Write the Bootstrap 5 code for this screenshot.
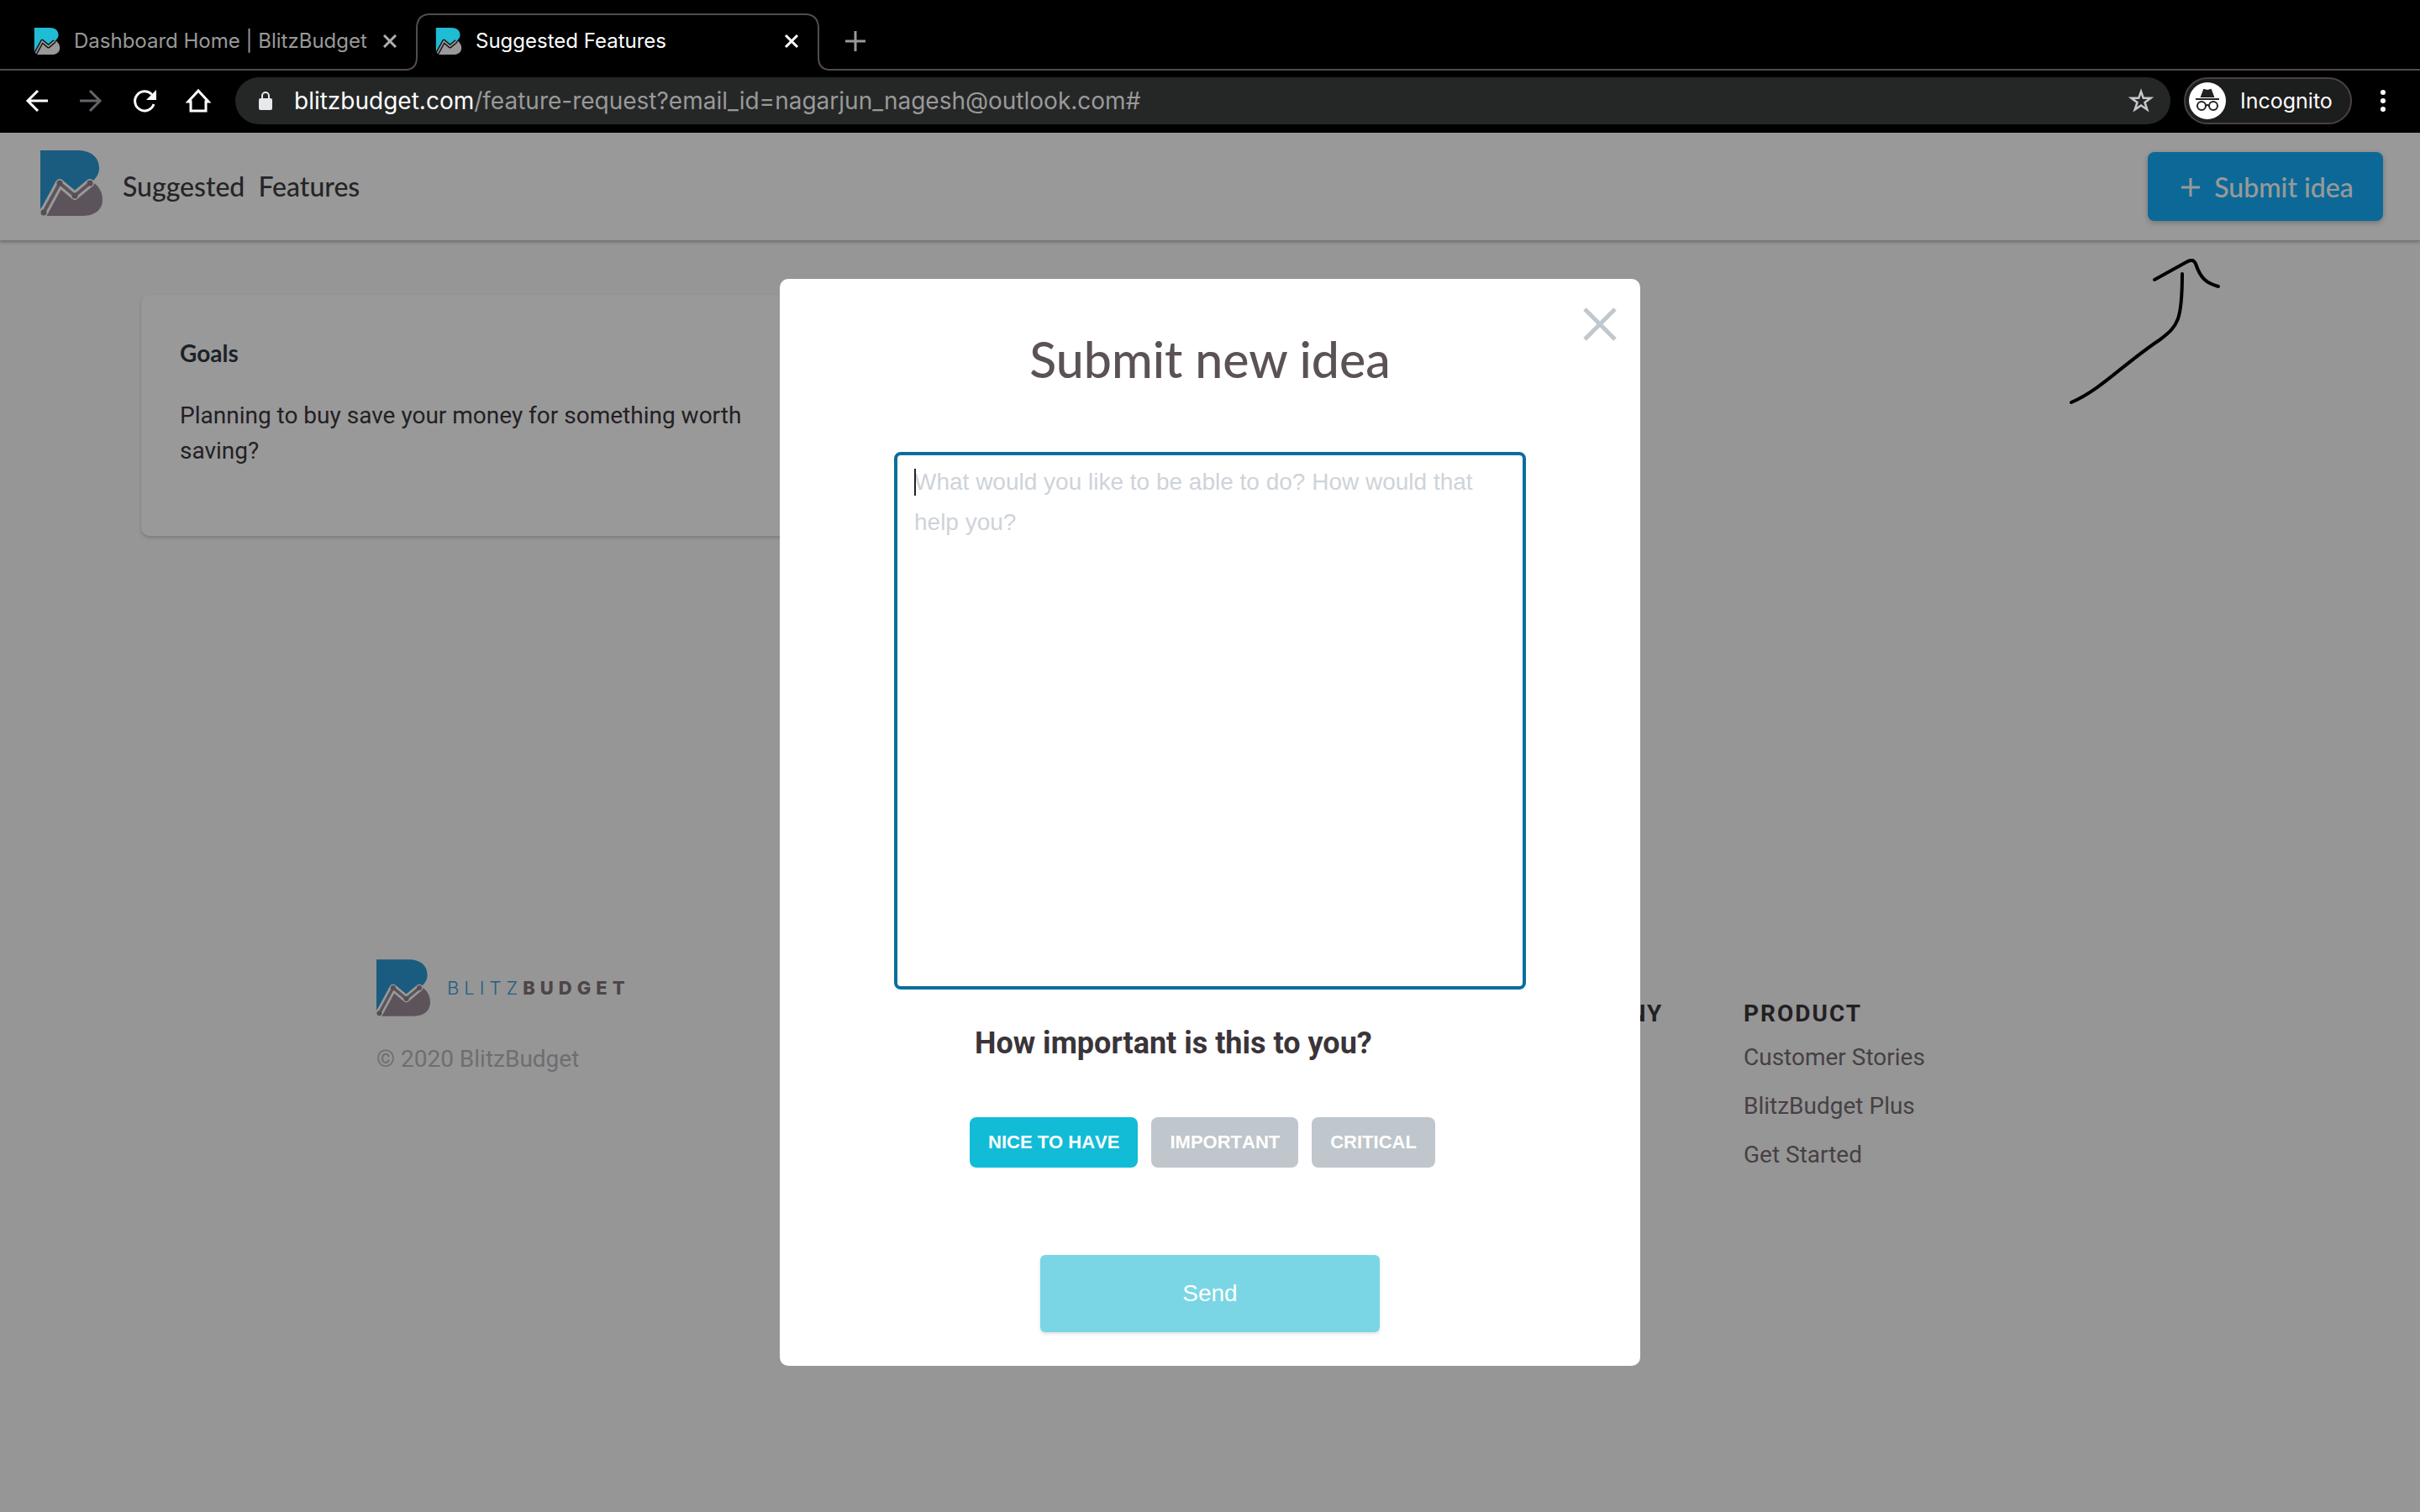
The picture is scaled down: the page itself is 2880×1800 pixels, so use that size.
<!DOCTYPE html>
<html lang="en">
<head>
<meta charset="utf-8">
<meta name="viewport" content="width=device-width, initial-scale=1">
<title>Suggested Features</title>
<link href="https://cdn.jsdelivr.net/npm/bootstrap@5.3.0/dist/css/bootstrap.min.css" rel="stylesheet">
<style>
:root { --ui: Roboto, "Noto Sans", sans-serif; --bar: Inter, Roboto, sans-serif; --title: Lato, "Open Sans", sans-serif; --ctl: "Liberation Sans", Arial, sans-serif; }
body { font-family: var(--ui); font-size: 28px; line-height: 42px; color: #3b363c; background: #fafafa; }
svg { display: block; flex: none; }
button { border: 0; background: none; padding: 0; }

/* browser window */
.chrome { background: #000; color: #fff; font-family: var(--bar); }
.tabstrip { height: 84px; padding-top: 16px; }
.tab-edge { border-bottom: 2px solid #544b50; }
.tab-item { height: 68px; font-size: 24px; line-height: 32px; }
.tab-idle { width: 484px; padding-left: 40px; padding-right: 12px; color: #999; }
.tab-open { width: 502px; height: 68px; }
.tab-open .outline { inset: 0; }
.tab-open .inner { padding: 0 35px 2px 34px; }
.toolbar { height: 74px; padding: 8px 39px 10px 28px; gap: 32px; }
.omnibox { height: 56px; border-radius: 28px; background: #252727; padding: 0 20px 0 26px; gap: 24px; margin: 0 -16px 0 -4px; }
.address { font-size: 28px; line-height: 36px; color: #999; text-decoration: none; }
.address b { font-weight: 400; color: #fff; }
.incog { height: 56px; width: 200px; border-radius: 28px; border: 2px solid #474145; background: #1c1d1d; padding-left: 4px; gap: 17px; font-size: 25px; line-height: 32px; color: #fff; }

/* page */
.site-head { height: 128px; background: #fff; padding: 0 44px 0 48px; box-shadow: 0 2px 4px rgba(0,0,0,.3); position: relative; }
.site-head h1 { font: 500 32px/40px var(--title); color: #403c42; margin: 0; word-spacing: 8px; }
.idea-btn { width: 280px; height: 82px; border-radius: 8px; background: #14b0fc; color: #fff; font: 500 32px/40px var(--title); gap: 16px; padding: 2px 0 0 4px; box-shadow: 0 2px 6px rgba(0,0,0,.25); }
.board { padding: 65px 168px 0; min-height: 856px; }
.board .row { --bs-gutter-x: 16px; }
.feature { background: #fff; border: 0; border-radius: 10px; padding: 47px 46px 80px; box-shadow: 0 2px 4px rgba(0,0,0,.18); }
.feature h2 { font: 700 28px/44px var(--title); color: #2f3a44; margin: 0 0 32px; }
.foot { display: grid; grid-template-columns: 1fr 243px 357px; padding: 0 448px; color: #80737c; }
.wordmark { font: 300 22px/28px var(--bar); letter-spacing: 6px; color: #3aa0d8; }
.wordmark b { font-weight: 800; color: #80737c; }
.foot h3 { font: 700 28px/36px var(--ui); letter-spacing: 2px; color: #3b363c; margin: 47px 0 5px; }
.foot a { color: #776c73; text-decoration: none; line-height: 58px; }
.copy { color: #b6b8bd; margin-top: 30px; }

/* dialog */
.veil { inset: 0; background: rgba(0,0,0,.4); padding-top: 174px; z-index: 5; }
.dialog-box { width: 1024px; background: #fff; border-radius: 10px; padding: 60px 136px 40px; position: relative; }
.dialog-box h2 { font: 500 59px/72px var(--title); color: #5b5257; margin: 0 0 74px; }
.dismiss { position: absolute; top: 34px; right: 28px; }
.idea-text { height: 640px; border: 4px solid #0a6e9d; border-radius: 8px; padding: 8px 20px; font: 400 28px/48px var(--ctl); resize: none; box-shadow: none; }
.idea-text::placeholder { color: #ced3d9; opacity: 1; }
.caret { position: absolute; left: 24px; top: 20px; width: 2px; height: 32px; background: #222; }
.ask { font: 700 36px/44px var(--ui); color: #3a3439; padding-left: 96px; margin: 42px 0 66px; }
.levels { gap: 16px; padding-left: 90px; margin-bottom: 104px; }
.level { height: 60px; border-radius: 8px; background: #bfc6cc; color: #fff; font: 700 22px/28px var(--ctl); font-kerning: none; padding: 0 22px; }
.level.on { background: #12bcd6; }
.send { width: 404px; height: 92px; border-radius: 6px; background: #7ad6e5; color: #fff; font: 400 28px/36px var(--ctl); box-shadow: 0 2px 4px rgba(0,0,0,.12); }
.scribble { position: absolute; right: 234px; top: 146px; z-index: 6; }
</style>
</head>
<body class="d-flex flex-column min-vh-100">
<svg width="0" height="0" class="position-absolute" aria-hidden="true">
  <defs>
    <g id="mark-top"><path d="M0 0H44C60 0 70 8 70 21C70 28 67 32 62 37L41 55L23 40L0 70Z"/></g>
    <g id="mark-low"><path d="M7 78L23 42L41 56L64 39C71 44 74 51 74 59C74 70 66 78 50 78Z"/></g>
    <g id="mark-line"><path d="M4 74L23 39L41 54L59 39"/></g>
    <symbol id="logo" viewBox="0 0 74 78">
      <use href="#mark-top" fill="#2c9ad4"/><use href="#mark-low" fill="#9a8c96"/>
      <use href="#mark-line" fill="none" stroke="#fff" stroke-width="10" stroke-linejoin="round" stroke-linecap="round"/>
      <use href="#mark-line" fill="none" stroke="#9a8c96" stroke-width="4"/>
      <g fill="#8f828b"><circle cx="4" cy="74" r="3.5"/><circle cx="23" cy="39" r="3.5"/><circle cx="41" cy="54" r="3.5"/><circle cx="59" cy="39" r="3.5"/></g>
    </symbol>
    <symbol id="fav" viewBox="0 0 74 78">
      <use href="#mark-top" fill="#1fbcd4"/><use href="#mark-low" fill="#999"/>
      <use href="#mark-line" fill="none" stroke="#111" stroke-width="11" stroke-linejoin="round"/>
      <use href="#mark-line" fill="none" stroke="#999" stroke-width="4"/>
    </symbol>
  </defs>
</svg>

<header class="chrome">
  <div class="tabstrip d-flex">
    <div class="tab-item tab-idle tab-edge d-flex align-items-center">
      <svg width="32" height="32" class="me-3"><use href="#fav"/></svg>
      <span class="flex-grow-1 text-nowrap">Dashboard Home | BlitzBudget</span>
      <button aria-label="Close tab"><svg width="16" height="16" stroke="#b0b0b0" stroke-width="3"><path d="M1 1L15 15M15 1L1 15"/></svg></button>
    </div>
    <div class="tab-open tab-item position-relative">
      <svg class="outline position-absolute" width="502" height="68" fill="none" stroke="#544b50" stroke-width="2"><path d="M0 67Q12 66 12 52V16Q13 2 26 1H476Q489 2 490 16V52Q490 66 502 67"/></svg>
      <div class="inner d-flex align-items-center h-100 position-relative">
        <svg width="32" height="32" class="me-3"><use href="#fav"/></svg>
        <span class="flex-grow-1">Suggested Features</span>
        <button aria-label="Close tab"><svg width="18" height="18" stroke="#fff" stroke-width="3"><path d="M2 2L16 16M16 2L2 16"/></svg></button>
      </div>
    </div>
    <div class="tab-item tab-edge d-flex align-items-center flex-grow-1 ps-3">
      <button class="ms-1" aria-label="New tab"><svg width="24" height="24" stroke="#999" stroke-width="3"><path d="M12 0V24M0 12H24"/></svg></button>
    </div>
  </div>
  <nav class="toolbar d-flex align-items-center" aria-label="Browser">
    <button aria-label="Back"><svg width="32" height="32" fill="none" stroke="#fff" stroke-width="3"><path d="M29 16H5M17 4L5 16L17 28"/></svg></button>
    <button aria-label="Forward"><svg width="32" height="32" fill="none" stroke="#66636a" stroke-width="3"><path d="M3 16H27M15 4L27 16L15 28"/></svg></button>
    <button aria-label="Reload"><svg width="32" height="32" fill="none" stroke="#fff" stroke-width="3"><path d="M27 20A11.500 11.500 0 1 1 24.500 8.500"/><path d="M30 3V15H18Z" fill="#fff" stroke="none"/></svg></button>
    <button aria-label="Home"><svg width="32" height="32" fill="none" stroke="#fff" stroke-width="3"><path d="M4 17L16 4L28 17H25V28H7V17Z"/></svg></button>
    <div class="omnibox d-flex align-items-center flex-grow-1">
      <svg width="20" height="24"><rect x="2" y="9" width="16" height="14" rx="2" fill="#e6e8ea"/><path d="M6 10V6A4 4 0 0 1 14 6V10" fill="none" stroke="#e6e8ea" stroke-width="2"/></svg>
      <a href="#" class="address flex-grow-1"><b>blitzbudget.com</b>/feature-request?email_id=nagarjun_nagesh@outlook.com#</a>
      <button aria-label="Bookmark"><svg width="30" height="30" viewBox="0 0 30 30" fill="none" stroke="#c6c8cc" stroke-width="2.500"><path d="M15 4L17.800 11.800H26.500L19.500 17L22.300 25.500L15 20.500L7.700 25.500L10.500 17L3.500 11.800H12.200Z"/></svg></button>
    </div>
    <button class="incog d-flex align-items-center">
      <svg width="44" height="44" fill="none" stroke="#222" stroke-width="2"><circle cx="22" cy="22" r="22" fill="#fff" stroke="none"/><path d="M18 9L22 10L26 9L29 17H15Z" fill="#222"/><path d="M8 20H36"/><circle cx="15" cy="28" r="5"/><circle cx="29" cy="28" r="5"/><path d="M20 28Q22 26 24 28"/></svg>
      <span>Incognito</span>
    </button>
    <button aria-label="Menu"><svg width="10" height="28" fill="#fff"><circle cx="5" cy="4" r="3"/><circle cx="5" cy="14" r="3"/><circle cx="5" cy="24" r="3"/></svg></button>
  </nav>
</header>

<div class="position-relative flex-grow-1">
  <div class="site-head d-flex align-items-center justify-content-between">
    <div class="d-flex align-items-center">
      <svg width="74" height="78" class="mb-2"><use href="#logo"/></svg>
      <h1 class="ms-4">Suggested Features</h1>
    </div>
    <button class="idea-btn d-flex align-items-center justify-content-center">
      <svg width="24" height="24" stroke="#fff" stroke-width="3"><path d="M12 1V23M1 12H23"/></svg>Submit idea
    </button>
  </div>

  <main class="board">
    <div class="row">
      <div class="col-4">
        <article class="card feature">
          <h2>Goals</h2>
          <p class="m-0">Planning to buy save your money for something worth saving?</p>
        </article>
      </div>
    </div>
  </main>

  <footer class="foot">
    <div>
      <div class="d-flex align-items-center">
        <svg width="64" height="68"><use href="#logo"/></svg>
        <div class="wordmark ms-3 ps-1">BLITZ<b>BUDGET</b></div>
      </div>
      <div class="copy">© 2020 BlitzBudget</div>
    </div>
    <div><h3>COMPANY</h3></div>
    <div>
      <h3>PRODUCT</h3>
      <nav class="d-flex flex-column" aria-label="Product">
        <a href="#">Customer Stories</a>
        <a href="#">BlitzBudget Plus</a>
        <a href="#">Get Started</a>
      </nav>
    </div>
  </footer>

  <div class="veil position-absolute d-flex justify-content-center align-items-start">
    <form class="dialog-box" role="dialog" aria-labelledby="dlg-title">
      <button type="button" class="dismiss" aria-label="Close"><svg width="40" height="40" stroke="#c0c7cd" stroke-width="5"><path d="M2 2L38 38M38 2L2 38"/></svg></button>
      <h2 id="dlg-title" class="text-center">Submit new idea</h2>
      <div class="position-relative">
        <textarea class="form-control idea-text" aria-labelledby="dlg-title" placeholder="What would you like to be able to do? How would that help you?"></textarea>
        <span class="caret"></span>
      </div>
      <p class="ask">How important is this to you?</p>
      <div class="levels d-flex">
        <button type="button" class="level on">NICE TO HAVE</button>
        <button type="button" class="level">IMPORTANT</button>
        <button type="button" class="level">CRITICAL</button>
      </div>
      <button type="button" class="send d-block mx-auto">Send</button>
    </form>
  </div>

  <svg class="scribble" width="190" height="180" fill="none" stroke="#000" stroke-width="4" stroke-linecap="round" stroke-linejoin="round"><path d="M9 175C44 160 70 130 115 100C135 84 141 80 141 22"/><path d="M108 29L146 8Q154 3 157 10C163 28 170 33 184 37"/></svg>
</div>
<script src="https://cdn.jsdelivr.net/npm/bootstrap@5.3.0/dist/js/bootstrap.bundle.min.js"></script>
</body>
</html>
